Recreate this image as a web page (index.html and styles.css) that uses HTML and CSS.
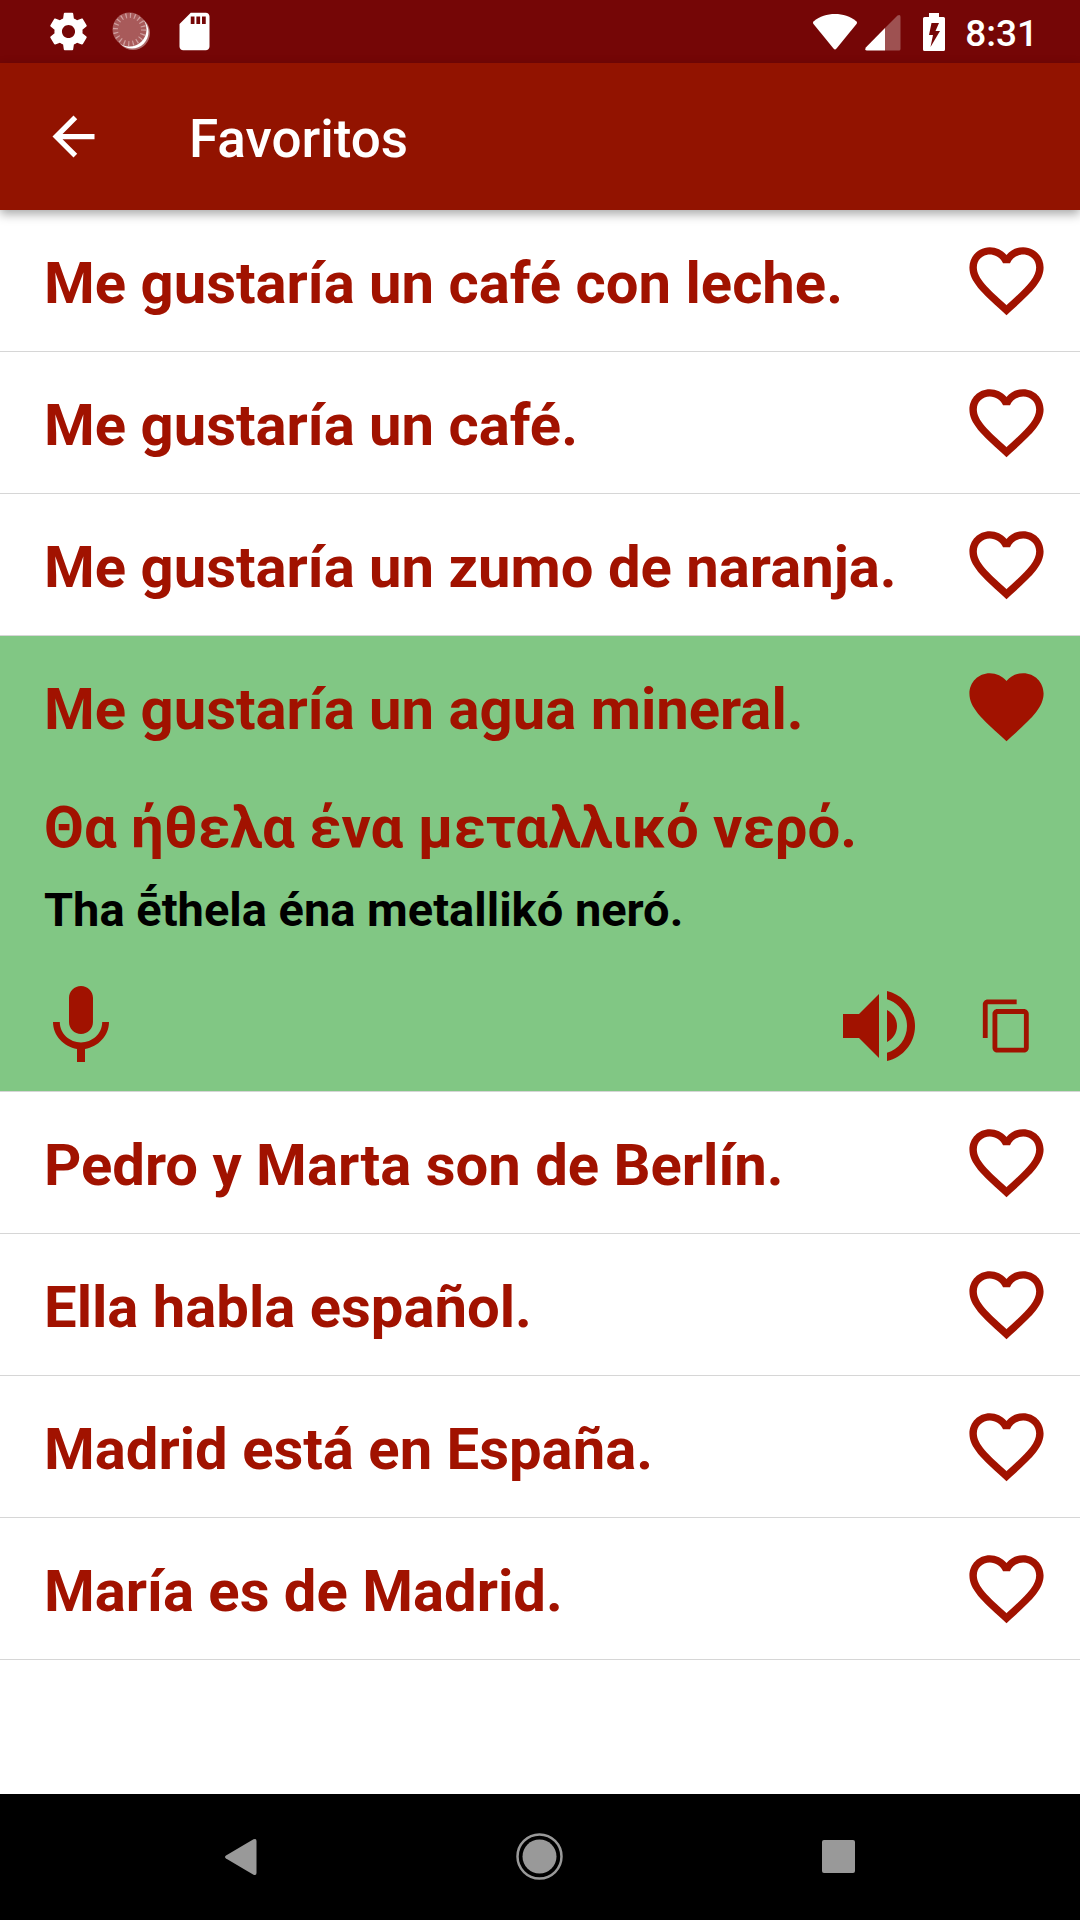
FILE: index.html
```html
<!DOCTYPE html>
<html lang="es">
<head>
<meta charset="utf-8">
<meta name="viewport" content="width=device-width, initial-scale=1">
<title>Favoritos</title>
<link rel="stylesheet" href="styles.css">
</head>
<body>
<svg class="defs" aria-hidden="true">
  <symbol id="heart-outline" viewBox="0 0 24 24"><path d="M16.5 3c-1.74 0-3.41.81-4.5 2.09C10.91 3.81 9.24 3 7.5 3 4.42 3 2 5.42 2 8.5c0 3.78 3.4 6.86 8.55 11.54L12 21.35l1.45-1.32C18.6 15.36 22 12.28 22 8.5 22 5.42 19.58 3 16.5 3zm-4.4 15.55l-.1.1-.1-.1C7.14 14.24 4 11.39 4 8.5 4 6.5 5.5 5 7.5 5c1.54 0 3.04.99 3.57 2.36h1.87C13.46 5.99 14.96 5 16.5 5c2 0 3.5 1.5 3.5 3.5 0 2.89-3.14 5.74-7.9 10.05z"/></symbol>
  <symbol id="heart" viewBox="0 0 24 24"><path d="M12 21.35l-1.45-1.32C5.4 15.36 2 12.28 2 8.5 2 5.42 4.42 3 7.5 3c1.74 0 3.41.81 4.5 2.09C13.09 3.81 14.76 3 16.5 3 19.58 3 22 5.42 22 8.5c0 3.78-3.4 6.86-8.55 11.54L12 21.35z"/></symbol>
</svg>

<div class="statusbar">
  <div class="notices">
    <svg class="notice" viewBox="0 0 24 24" role="img" aria-label="Ajustes"><path d="M19.43 12.98c.04-.32.07-.64.07-.98s-.03-.66-.07-.98l2.11-1.65c.19-.15.24-.42.12-.64l-2-3.46c-.12-.22-.39-.3-.61-.22l-2.49 1c-.52-.4-1.08-.73-1.69-.98l-.38-2.65C14.46 2.18 14.25 2 14 2h-4c-.25 0-.46.18-.49.42l-.38 2.65c-.61.25-1.17.59-1.69.98l-2.49-1c-.23-.09-.49 0-.61.22l-2 3.46c-.13.22-.07.49.12.64l2.11 1.65c-.04.32-.07.65-.07.98s.03.66.07.98l-2.11 1.65c-.19.15-.24.42-.12.64l2 3.46c.12.22.39.3.61.22l2.49-1c.52.4 1.08.73 1.69.98l.38 2.65c.03.24.24.42.49.42h4c.25 0 .46-.18.49-.42l.38-2.65c.61-.25 1.17-.59 1.69-.98l2.49 1c.23.09.49 0 .61-.22l2-3.46c.12-.22.07-.49-.12-.64l-2.11-1.65zM12 15.5c-1.930 0-3.500-1.570-3.500-3.500s1.570-3.500 3.500-3.500 3.500 1.570 3.500 3.500-1.570 3.500-3.500 3.500z"/></svg>
    <svg class="notice" viewBox="0 0 45 45" role="img" aria-label="Sincronizando">
      <circle cx="24" cy="24" r="17" opacity=".4"/>
      <circle cx="23" cy="23" r="16.500"/>
      <circle cx="20.500" cy="20.500" r="17" fill="#a85a5a"/>
      <circle cx="20.500" cy="20.500" r="14" fill="none" stroke="#d0a0a0" stroke-width="5" stroke-dasharray="1.2 3.198"/>
    </svg>
    <svg class="notice" viewBox="0 0 24 24" role="img" aria-label="Tarjeta SD"><path d="M18 2h-8L4.020 8 4 20c0 1.100.9 2 2 2h12c1.100 0 2-.9 2-2V4c0-1.100-.9-2-2-2zm-6 6h-2V4h2v4zm3 0h-2V4h2v4zm3 0h-2V4h2v4z"/></svg>
  </div>
  <div class="system">
    <svg class="wifi" viewBox="0 0 46 38" role="img" aria-label="Wi-Fi"><path d="M1.500 8.500C8 3 15 1 23 1s15 2 21.500 7.500q1 1 .2 2.200L24.500 35.600q-1.500 1.800-3 0L1.300 10.700q-.8-1.200.2-2.200z"/></svg>
    <svg class="signal" viewBox="0 0 36 36" role="img" aria-label="Cobertura"><path opacity=".3" d="M20 13L32.500.6Q35.500-1 35.500 2V34q0 1.500-1.500 1.500H20z"/><path d="M20 13V35.500H2Q-.5 35.500.8 32.500z"/></svg>
    <svg class="battery" viewBox="0 0 22 38" role="img" aria-label="Cargando"><path fill-rule="evenodd" d="M6 0h10v4h4.500Q22 4 22 5.500v31q0 1.500-1.500 1.500h-19Q0 38 0 36.500v-31Q0 4 1.500 4H6zM8.500 10L6 22h4L7.500 34 17 18h-4.500L16 10z"/></svg>
    <time class="clock">8:31</time>
  </div>
</div>

<header class="appbar">
  <button class="icon-button" aria-label="Volver"><svg class="icon-back" viewBox="0 0 24 24"><path d="M20 11H7.830l5.590-5.590L12 4l-8 8 8 8 1.410-1.410L7.830 13H20v-2z"/></svg></button>
  <h1 class="title">Favoritos</h1>
</header>

<main>
  <ul class="phrases">
    <li class="phrase"><div class="row"><p class="text">Me gustaría un café con leche.</p><button class="icon-button" aria-label="Favorito"><svg class="icon-heart"><use href="#heart-outline"/></svg></button></div></li>
    <li class="phrase"><div class="row"><p class="text">Me gustaría un café.</p><button class="icon-button" aria-label="Favorito"><svg class="icon-heart"><use href="#heart-outline"/></svg></button></div></li>
    <li class="phrase"><div class="row"><p class="text">Me gustaría un zumo de naranja.</p><button class="icon-button" aria-label="Favorito"><svg class="icon-heart"><use href="#heart-outline"/></svg></button></div></li>
    <li class="phrase open">
      <div class="row"><p class="text">Me gustaría un agua mineral.</p><button class="icon-button" aria-label="Favorito" aria-pressed="true"><svg class="icon-heart"><use href="#heart"/></svg></button></div>
      <div class="translation">
        <p class="text" lang="el">Θα ήθελα ένα μεταλλικό νερό.</p>
        <p class="romanized" lang="el-Latn">Tha ḗthela éna metallikó neró.</p>
      </div>
      <div class="actions">
        <button class="icon-button" aria-label="Grabar"><svg class="icon-large" viewBox="0 0 24 24"><path d="M12 14c1.660 0 2.990-1.340 2.990-3L15 5c0-1.660-1.340-3-3-3S9 3.340 9 5v6c0 1.660 1.340 3 3 3zm5.300-3c0 3-2.540 5.100-5.300 5.100S6.700 14 6.700 11H5c0 3.410 2.720 6.230 6 6.720V21h2v-3.280c3.280-.48 6-3.300 6-6.720h-1.700z"/></svg></button>
        <button class="icon-button listen" aria-label="Escuchar"><svg class="icon-large" viewBox="0 0 24 24"><path d="M3 9v6h4l5 5V4L7 9H3zm13.500 3c0-1.770-1.020-3.290-2.500-4.030v8.050c1.480-.73 2.500-2.250 2.500-4.020zM14 3.230v2.060c2.890.86 5 3.540 5 6.710s-2.110 5.850-5 6.710v2.060c4.010-.91 7-4.490 7-8.770s-2.990-7.860-7-8.770z"/></svg></button>
        <button class="icon-button copy" aria-label="Copiar"><svg class="icon-copy" viewBox="0 0 24 24"><path d="M16 1H4c-1.100 0-2 .9-2 2v14h2V3h12V1zm3 4H8c-1.100 0-2 .9-2 2v14c0 1.100.9 2 2 2h11c1.100 0 2-.9 2-2V7c0-1.100-.9-2-2-2zm0 16H8V7h11v14z"/></svg></button>
      </div>
    </li>
    <li class="phrase"><div class="row"><p class="text">Pedro y Marta son de Berlín.</p><button class="icon-button" aria-label="Favorito"><svg class="icon-heart"><use href="#heart-outline"/></svg></button></div></li>
    <li class="phrase"><div class="row"><p class="text">Ella habla español.</p><button class="icon-button" aria-label="Favorito"><svg class="icon-heart"><use href="#heart-outline"/></svg></button></div></li>
    <li class="phrase"><div class="row"><p class="text">Madrid está en España.</p><button class="icon-button" aria-label="Favorito"><svg class="icon-heart"><use href="#heart-outline"/></svg></button></div></li>
    <li class="phrase"><div class="row"><p class="text">María es de Madrid.</p><button class="icon-button" aria-label="Favorito"><svg class="icon-heart"><use href="#heart-outline"/></svg></button></div></li>
  </ul>
</main>

<nav class="navbar" aria-label="Sistema">
  <button class="icon-button" aria-label="Atrás"><svg class="icon-nav" viewBox="0 0 48 48"><path d="M9 22.400L36.500 6.300Q39.500 5 39.500 8V40Q39.500 43 36.500 41.700L9 25.600Q7 24 9 22.400z"/></svg></button>
  <button class="icon-button" aria-label="Inicio"><svg class="icon-nav" viewBox="0 0 48 48"><circle cx="23.500" cy="23.500" r="17"/><circle cx="23.500" cy="23.500" r="22" fill="none" stroke="currentColor" stroke-width="2.500"/></svg></button>
  <button class="icon-button" aria-label="Recientes"><svg class="icon-nav" viewBox="0 0 48 48"><rect x="7" y="7" width="33" height="33" rx="2"/></svg></button>
</nav>
</body>
</html>
```

FILE: styles.css
```css
* {
  box-sizing: border-box;
}

body {
  margin: 0;
  min-height: 100vh;
  display: flex;
  flex-direction: column;
  background: #fff;
  color: #a11200;
  font-family: Roboto, "Noto Sans", sans-serif;
}

h1,
p,
ul {
  margin: 0;
  padding: 0;
}

svg {
  display: block;
  fill: currentColor;
}

.defs {
  display: none;
}

.icon-button {
  display: flex;
  align-items: center;
  justify-content: center;
  flex: none;
  padding: 0;
  border: 0;
  background: none;
  color: inherit;
  cursor: pointer;
}

/* Status bar */
.statusbar {
  display: flex;
  align-items: center;
  justify-content: space-between;
  height: 63px;
  padding: 0 42px 0 46px;
  background: #750606;
  color: #fff;
}

.notices {
  display: flex;
  gap: 18px;
}

.notice {
  width: 45px;
  height: 45px;
}

.system {
  display: flex;
  align-items: center;
}

.wifi {
  width: 46px;
  height: 38px;
}

.signal {
  width: 36px;
  height: 36px;
  margin: 2px 22px 0 7px;
}

.battery {
  width: 22px;
  height: 38px;
}

.clock {
  margin-left: 20px;
  padding-top: 4px;
  font-size: 37px;
  line-height: 44px;
  font-weight: 500;
}

/* App bar */
.appbar {
  position: relative;
  z-index: 1;
  display: flex;
  align-items: center;
  gap: 84px;
  height: 147px;
  padding: 0 42px;
  background: #921300;
  color: #fff;
  box-shadow: 0 4px 10px rgba(0, 0, 0, 0.35);
}

.icon-back {
  width: 63px;
  height: 63px;
}

.title {
  padding-top: 4px;
  font-size: 53px;
  line-height: 62px;
  font-weight: 500;
}

/* Phrase list */
main {
  flex: 1;
}

.phrases {
  list-style: none;
}

.phrase {
  border-bottom: 1px solid #d6d6d6;
}

.open {
  background: #81c784;
}

.row {
  display: flex;
  align-items: center;
  justify-content: space-between;
  min-height: 141px;
  padding: 0 29px 0 44px;
}

.text {
  font-size: 58px;
  line-height: 68px;
  font-weight: 700;
}

.row .text {
  padding-top: 4px;
}

.icon-heart {
  width: 89px;
  height: 89px;
}

.translation {
  display: flex;
  flex-direction: column;
  gap: 21px;
  padding: 16px 44px 0;
}

.romanized {
  color: #000;
  font-size: 47px;
  line-height: 56px;
  font-weight: 700;
}

.actions {
  display: flex;
  align-items: center;
  padding: 40px 29px 17px 33px;
}

.icon-large {
  width: 96px;
  height: 96px;
}

.listen {
  margin-left: auto;
}

.copy {
  width: 89px;
  margin-left: 35px;
}

.icon-copy {
  width: 58px;
  height: 58px;
}

/* System navigation */
.navbar {
  display: grid;
  grid-template-columns: repeat(3, 1fr);
  height: 126px;
  padding: 0 92px;
  background: #000;
  color: #999;
}

.icon-nav {
  width: 48px;
  height: 48px;
}
```
